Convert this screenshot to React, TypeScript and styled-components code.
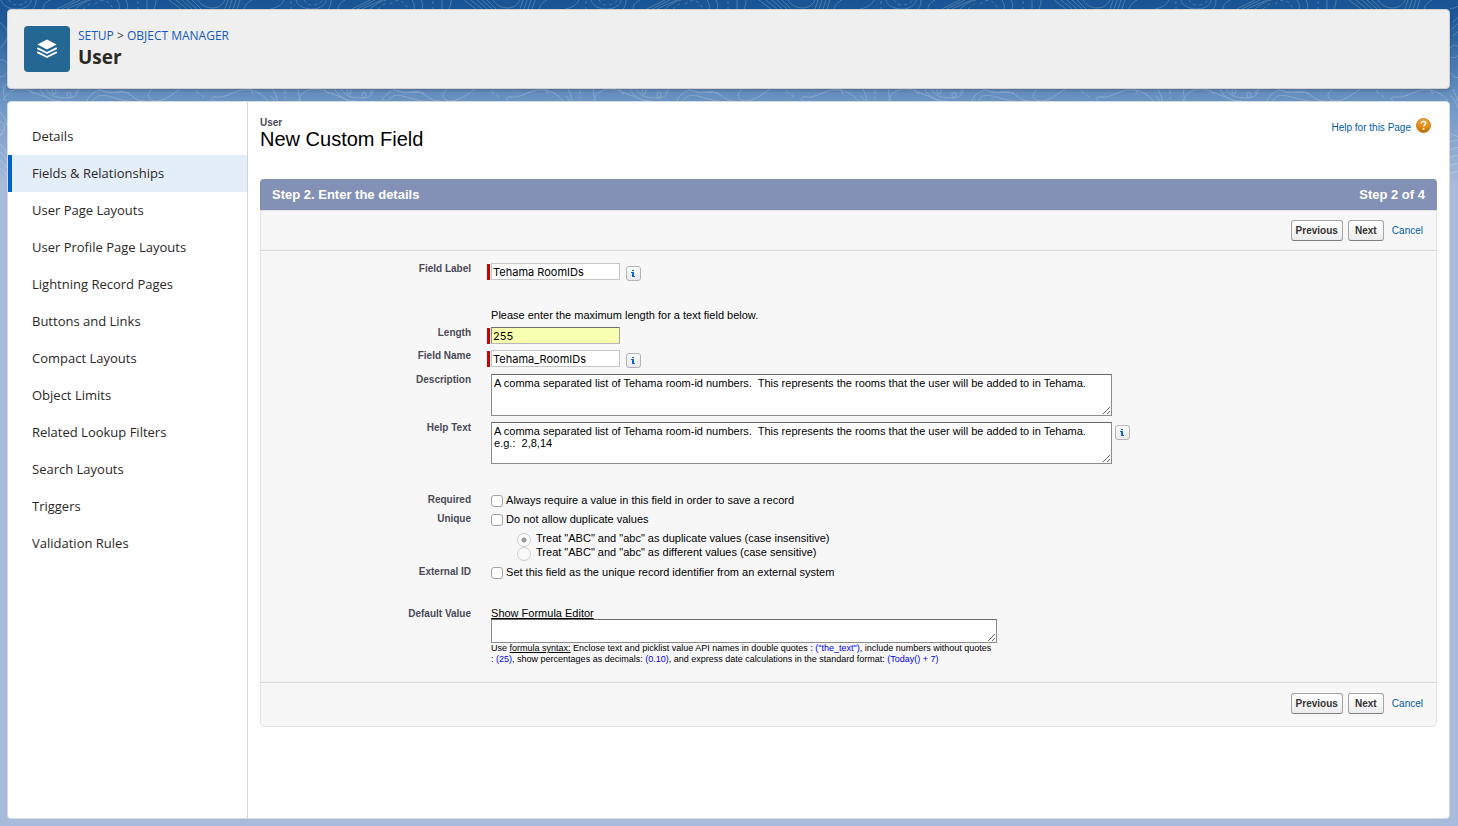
import React from "react";
import styled, { createGlobalStyle, css } from "styled-components";

const sans = `"Liberation Sans", Arial, Helvetica, sans-serif`;
const brand = `"Open Sans", "Noto Sans", sans-serif`;

const GlobalStyle = createGlobalStyle`
  *, *::before, *::after { box-sizing: border-box; }
  body { margin: 0; font-family: ${sans}; color: #000; background: #a8bbdb; }
  ul { list-style: none; margin: 0; padding: 0; }
  h1, h2, p { margin: 0; }
  a { text-decoration: none; }
`;

const Page = styled.div`
  position: relative;
  min-height: 100vh;
  display: flex;
  flex-direction: column;
  gap: 12px;
  padding: 9px 8px 7px 7px;
  background: linear-gradient(180deg, #195594 0, #1d5998 20px, #6f97c5 105px, #a8bbdb 185px);
`;

const Backdrop = styled.svg`
  position: absolute;
  top: 0;
  left: 0;
  width: 100%;
  height: 190px;
  pointer-events: none;
`;

const Header = styled.header`
  position: relative;
  display: flex;
  align-items: flex-start;
  gap: 8px;
  min-height: 80px;
  padding: 16px;
  border: 1px solid #d0d0d0;
  border-radius: 4px;
  background: #efefef;
  box-shadow: 0 2px 3px rgba(0, 0, 0, 0.16);
`;

const AppIcon = styled.span`
  display: grid;
  place-items: center;
  width: 46px;
  height: 46px;
  border-radius: 4px;
  background: #236792;
`;

const Crumbs = styled.nav`
  font: 12px/20px ${brand};
  color: #3e3e3c;
  a { color: #1459be; }
`;

const HeaderTitle = styled.h1`
  font: 700 19px/23px ${brand};
  color: #2b2826;
`;

const Card = styled.div`
  position: relative;
  flex: 1;
  display: flex;
  border: 1px solid #d5dae2;
  border-radius: 4px;
  background: #fff;
`;

const Sidebar = styled.nav`
  flex: none;
  width: 240px;
  padding-top: 16px;
  border-right: 1px solid #d4d4d4;
`;

const NavLink = styled.a<{ $active?: boolean }>`
  display: block;
  padding-left: 24px;
  font: 13px/37px ${brand};
  color: #2b2826;
  ${(p) =>
    p.$active &&
    css`
      padding-left: 20px;
      border-left: 4px solid #0062cf;
      background: #e4eef9;
    `}
`;

const Main = styled.main`
  flex: 1;
  min-width: 0;
  padding: 14px 12px;
`;

const PageHead = styled.div`
  display: flex;
  justify-content: space-between;
  align-items: flex-start;
  min-height: 63px;
`;

const Kicker = styled.p`
  font: 700 10px/13px ${sans};
  color: #4a4a56;
`;

const Title = styled.h2`
  font: 400 20px/20px ${sans};
`;

const HelpLink = styled.a`
  display: flex;
  gap: 5px;
  padding: 2px 6px 0 0;
  font: 10px/20px ${sans};
  color: #015ba7;
`;

const StepBar = styled.div`
  display: flex;
  justify-content: space-between;
  padding: 0 12px;
  border-radius: 4px 4px 0 0;
  background: #8491b6;
  color: #fff;
  font: 700 13px/31px ${sans};
`;

const Panel = styled.form`
  border: 1px solid #e2e2e4;
  border-radius: 0 0 5px 5px;
  background: #f7f7f7;
`;

const ButtonBar = styled.div<{ $bottom?: boolean }>`
  display: flex;
  justify-content: flex-end;
  align-items: center;
  gap: 5px;
  padding: ${(p) => (p.$bottom ? "10px 13px 12px" : "9px 13px")};
`;

const Button = styled.button`
  height: 21px;
  min-width: 36px;
  padding: 0 4px;
  border: 1px solid #a5a5a5;
  border-bottom-color: #7f7f7f;
  border-radius: 3px;
  background: linear-gradient(#fff, #ececec);
  font: 700 10px/18px ${sans};
  color: #333;
`;

const Cancel = styled.a`
  padding-left: 3px;
  font: 10px/20px ${sans};
  color: #015ba7;
`;

const Fields = styled.div`
  display: flex;
  flex-direction: column;
  gap: 5px;
  padding: 11px 8px 17px 0;
  border-top: 1px solid #d2d2d4;
  border-bottom: 1px solid #d2d2d4;
  box-shadow: inset 0 1px #fff, 0 1px #fff;
`;

const Row = styled.div<{ $after?: number }>`
  display: grid;
  grid-template-columns: 18% 1fr;
  column-gap: 16px;
  margin-bottom: ${(p) => p.$after ?? 0}px;
`;

const labelText = css`
  padding-top: 1px;
  font: 700 10px/12px ${sans};
  color: #4a4a56;
  text-align: right;
`;

const Label = styled.label`
  ${labelText}
`;

const Caption = styled.span`
  ${labelText}
`;

const Control = styled.div`
  display: flex;
  align-items: flex-start;
  gap: 6px;
  padding-top: 1px;
`;

const Required = styled.div`
  display: flex;
  align-items: flex-end;
  gap: 1px;
  &::before {
    content: "";
    width: 3px;
    height: 16px;
    background: #c00;
  }
`;

const TextInput = styled.input<{ $highlight?: boolean }>`
  width: 129px;
  height: 17px;
  padding: 0 1px;
  border: 1px solid #c6c6c6;
  background: #fff;
  font: 11px/15px Inter, ${sans};
  color: #000;
  ${(p) =>
    p.$highlight &&
    css`
      border-color: #6e6e6e #a5a5a5 #b8b8b8 #8a8a8a;
      background: #f8ffb0;
    `}
`;

const Stack = styled.div`
  display: flex;
  flex-direction: column;
  align-items: flex-start;
  min-width: 0;
  padding-left: 4px;
`;

const Line = styled.p`
  font: 11px/12px ${sans};
`;

const Area = styled.textarea<{ $short?: boolean }>`
  display: block;
  width: ${(p) => (p.$short ? 506 : 621)}px;
  max-width: 100%;
  height: ${(p) => (p.$short ? 24 : 42)}px;
  margin: 0;
  padding: 2px;
  border: 1px solid #8c8c8c;
  border-top-color: #6a6a6a;
  overflow: hidden;
  background: #fff;
  font: 11px/12px ${sans};
  color: #000;
`;

const AreaControl = styled(Control)`
  gap: 3px;
  padding-left: 4px;
`;

const InfoButton = styled.button`
  display: grid;
  place-items: center;
  width: 15px;
  height: 15px;
  margin-top: 3px;
  padding: 0;
  border: 1px solid #b4b4b8;
  border-radius: 3px;
  background: linear-gradient(#fbfbfb, #e9e9ec);
`;

const Check = styled.label`
  display: flex;
  align-items: center;
  gap: 3px;
  font: 11px/14px ${sans};
`;

const CheckBox = styled.input`
  appearance: none;
  width: 12px;
  height: 12px;
  margin: 2px 0 0;
  border: 1px solid #a3a3a3;
  border-radius: 3px;
  background: #fff;
`;

const RadioList = styled.div`
  padding: 5px 0 1px 26px;
`;

const RadioLabel = styled.label`
  display: flex;
  align-items: flex-start;
  gap: 5px;
  font: 11px/14px ${sans};
`;

const Radio = styled.input`
  appearance: none;
  width: 14px;
  height: 14px;
  margin: 2px 0 -2px;
  border: 1px solid #cfcfcf;
  border-radius: 50%;
  background: #f9f9f9;
  &:checked {
    background: radial-gradient(circle, #999 0 2px, #f9f9f9 3px);
  }
`;

const EditorLink = styled.a`
  font: 11px/12px ${sans};
  color: #000;
  text-decoration: underline;
`;

const Hint = styled.p`
  max-width: 503px;
  font: 9px/11px ${sans};
  a { color: #000; text-decoration: underline; }
  b { font-weight: 400; color: #0000f5; }
`;

const LayersIcon = () => (
  <svg width="20" height="20" viewBox="0 0 20 20" aria-hidden="true">
    <path d="M10 .5 19.6 5.6 10 10.5.4 5.6Z" fill="#fff" />
    <path
      d="M.8 9.4 10 14 19.2 9.4M.8 13.4 10 18 19.2 13.4"
      fill="none"
      stroke="#fff"
      strokeWidth="1.8"
      strokeLinecap="round"
      strokeLinejoin="round"
    />
  </svg>
);

const HelpIcon = () => (
  <svg width="15" height="15" viewBox="0 0 15 15" aria-hidden="true">
    <defs>
      <linearGradient id="help-fill" x2="0" y2="1">
        <stop offset="0" stopColor="#f2a63a" />
        <stop offset="0.6" stopColor="#e58a0c" />
        <stop offset="1" stopColor="#b96a07" />
      </linearGradient>
    </defs>
    <circle cx="7.5" cy="7.5" r="7" fill="url(#help-fill)" stroke="#b5701c" strokeWidth="0.8" />
    <path
      d="M5.4 5.6c0-1.3 1-2 2.1-2s2.2.7 2.2 1.9c0 1.5-2 1.6-2 3.2"
      fill="none"
      stroke="#fff"
      strokeWidth="1.5"
    />
    <circle cx="7.6" cy="10.9" r="1" fill="#fff" />
  </svg>
);

const InfoIcon = () => (
  <svg width="13" height="13" viewBox="0 0 13 13" aria-hidden="true">
    <path d="M5 3h2v1H5ZM5 5h2v4h1v1H5V9V6H4V5Z" fill="#0b66d0" />
  </svg>
);

const Info = ({ topic }: { topic: string }) => (
  <InfoButton type="button" aria-label={`Information about ${topic}`}>
    <InfoIcon />
  </InfoButton>
);

const Contours = () => (
  <Backdrop aria-hidden="true">
    <defs>
      <pattern id="contours" width="295" height="190" patternUnits="userSpaceOnUse">
        <g fill="none" stroke="#fff" strokeWidth="1">
          <path d="M1 0C2 5 8 9 17 9s14-5 14-9M-4 0c0 4 2 7 4 9M36 0c0 4-1 7-3 9M43 9c0-4 3-7 7-9M57 9 75 0M62 9 80 0M67 9 87 0M75 9c5-4 10-8 16-9M117 0c2 3 3 6 2 9M126 0c2 3 2 6 1 9M147 0v9M156 0c0 4-1 7-2 9M169 0l12 9M176 0l11 9M182 0l10 9M187 0l10 9M192 0l9 9M198 0c4 6 9 8 15 8s10-4 12-8M225 9l3-9M229 9l3-9M233 9l3-9M237 9l3-9M244 9c1-4 4-7 8-9M284 0c-2 5-8 8-14 9M297 0c-2 3-2 6-1 9" />
          <path d="M9 0c2 4 5 5 9 5s8-2 9-5M95 4c7-6 14-4 18 5M138 1v8M83 9l9-7M291 1v8" strokeDasharray="3 3" />
          <path d="M3 101c3-8 9-12 17-12s14 4 20 6 10 3 13 6M40 89c3 7 9 12 22 12M46 89c4 6 8 9 20 9s12-6 12-9M87 101c3-8 11-12 17-10 10 4 16-3 25 3 6 4 8 7 16 7M93 101c5-9 14-5 22-3s10 3 15 3M98 89c10 6 20 2 31 4M152 89c-7 6-4 12 4 12s17-7 24-12M213 101c-4-3 0-5 4-4 8 1 15-5 25-7s21 4 26 11M273 89c2 5 4 8 4 12M30 89c0 3 2 4 4 5M250 89l3 5" />
          <ellipse cx="54" cy="91" rx="2" ry="3" />
          <ellipse cx="69" cy="95" rx="2" ry="3" />
          <path d="M196 91l8 6M285 90v9M76 90v6" strokeDasharray="4 3" />
          <path d="M-1 22c6 4 10 9 8 16s-6 8-8 12M0 60c5-1 8 3 8 8s-4 9-8 9M8 82c-5 3-6 12-2 19M0 112c4 4 6 8 7 14M0 121c6 4 6 10 0 14M0 129c4 3 4 5 0 7M0 144c4 3 6 6 7 10M0 152c3 2 5 5 7 9M0 160c3 2 5 4 7 8M0 168c3 2 5 4 7 8M273 22l10-9M272 29l11-10M273 36l9-8M270 48c5-6 10-2 9 4s-4 6-8 5M271 73c4 6 7 5 12 3M271 96c5 5 9 15 10 26M271 134c5 2 7 3 11 3M271 142c5-3 8-2 11 0M271 150c4-3 8-3 11-1M270 158c4-3 8-3 12-1M270 166c4-3 8-3 12-1M270 174c4-3 8-3 12-1" />
        </g>
      </pattern>
    </defs>
    <rect width="100%" height="100%" fill="url(#contours)" opacity="0.22" />
  </Backdrop>
);

const sections = [
  "Details",
  "Fields & Relationships",
  "User Page Layouts",
  "User Profile Page Layouts",
  "Lightning Record Pages",
  "Buttons and Links",
  "Compact Layouts",
  "Object Limits",
  "Related Lookup Filters",
  "Search Layouts",
  "Triggers",
  "Validation Rules",
];

const Actions = ({ bottom }: { bottom?: boolean }) => (
  <ButtonBar $bottom={bottom}>
    <Button type="button">Previous</Button>
    <Button type="button">Next</Button>
    <Cancel href="#cancel">Cancel</Cancel>
  </ButtonBar>
);

const description =
  "A comma separated list of Tehama room-id numbers.  This represents the rooms that the user will be added to in Tehama.";

export default function App() {
  return (
    <Page>
      <GlobalStyle />
      <Contours />
      <Header>
        <AppIcon>
          <LayersIcon />
        </AppIcon>
        <div>
          <Crumbs aria-label="Breadcrumb">
            <a href="#setup">SETUP</a> &gt; <a href="#objects">OBJECT MANAGER</a>
          </Crumbs>
          <HeaderTitle>User</HeaderTitle>
        </div>
      </Header>
      <Card>
        <Sidebar aria-label="Object sections">
          <ul>
            {sections.map((name) => {
              const active = name === "Fields & Relationships";
              return (
                <li key={name}>
                  <NavLink href="#section" $active={active} aria-current={active ? "page" : undefined}>
                    {name}
                  </NavLink>
                </li>
              );
            })}
          </ul>
        </Sidebar>
        <Main>
          <PageHead>
            <div>
              <Kicker>User</Kicker>
              <Title>New Custom Field</Title>
            </div>
            <HelpLink href="#help">
              Help for this Page
              <HelpIcon />
            </HelpLink>
          </PageHead>
          <StepBar>
            <span>Step 2. Enter the details</span>
            <span>Step 2 of 4</span>
          </StepBar>
          <Panel>
            <Actions />
            <Fields>
              <Row $after={23}>
                <Label htmlFor="label">Field Label</Label>
                <Control>
                  <Required>
                    <TextInput id="label" defaultValue="Tehama RoomIDs" />
                  </Required>
                  <Info topic="Field Label" />
                </Control>
              </Row>
              <Row>
                <span />
                <Stack>
                  <Line>Please enter the maximum length for a text field below.</Line>
                </Stack>
              </Row>
              <Row>
                <Label htmlFor="length">Length</Label>
                <Control>
                  <Required>
                    <TextInput id="length" $highlight defaultValue="255" />
                  </Required>
                </Control>
              </Row>
              <Row>
                <Label htmlFor="name">Field Name</Label>
                <Control>
                  <Required>
                    <TextInput id="name" defaultValue="Tehama_RoomIDs" />
                  </Required>
                  <Info topic="Field Name" />
                </Control>
              </Row>
              <Row>
                <Label htmlFor="description">Description</Label>
                <AreaControl>
                  <Area id="description" defaultValue={description} />
                </AreaControl>
              </Row>
              <Row $after={24}>
                <Label htmlFor="help">Help Text</Label>
                <AreaControl>
                  <Area id="help" defaultValue={`${description}\ne.g.:  2,8,14`} />
                  <Info topic="Help Text" />
                </AreaControl>
              </Row>
              <Row>
                <Caption>Required</Caption>
                <Stack>
                  <Check>
                    <CheckBox type="checkbox" />
                    Always require a value in this field in order to save a record
                  </Check>
                </Stack>
              </Row>
              <Row>
                <Caption>Unique</Caption>
                <Stack>
                  <Check>
                    <CheckBox type="checkbox" />
                    Do not allow duplicate values
                  </Check>
                  <RadioList>
                    <RadioLabel>
                      <Radio type="radio" name="case" defaultChecked disabled />
                      Treat "ABC" and "abc" as duplicate values (case insensitive)
                    </RadioLabel>
                    <RadioLabel>
                      <Radio type="radio" name="case" disabled />
                      Treat "ABC" and "abc" as different values (case sensitive)
                    </RadioLabel>
                  </RadioList>
                </Stack>
              </Row>
              <Row $after={23}>
                <Caption>External ID</Caption>
                <Stack>
                  <Check>
                    <CheckBox type="checkbox" />
                    Set this field as the unique record identifier from an external system
                  </Check>
                </Stack>
              </Row>
              <Row>
                <Label htmlFor="default">Default Value</Label>
                <Stack>
                  <EditorLink href="#editor">Show Formula Editor</EditorLink>
                  <Area id="default" $short />
                  <Hint>
                    Use <a href="#syntax">formula syntax:</a> Enclose text and picklist value API names in double
                    quotes : <b>("the_text")</b>, include numbers without quotes : <b>(25)</b>, show percentages as
                    decimals: <b>(0.10)</b>, and express date calculations in the standard format:{" "}
                    <b>(Today() + 7)</b>
                  </Hint>
                </Stack>
              </Row>
            </Fields>
            <Actions bottom />
          </Panel>
        </Main>
      </Card>
    </Page>
  );
}
